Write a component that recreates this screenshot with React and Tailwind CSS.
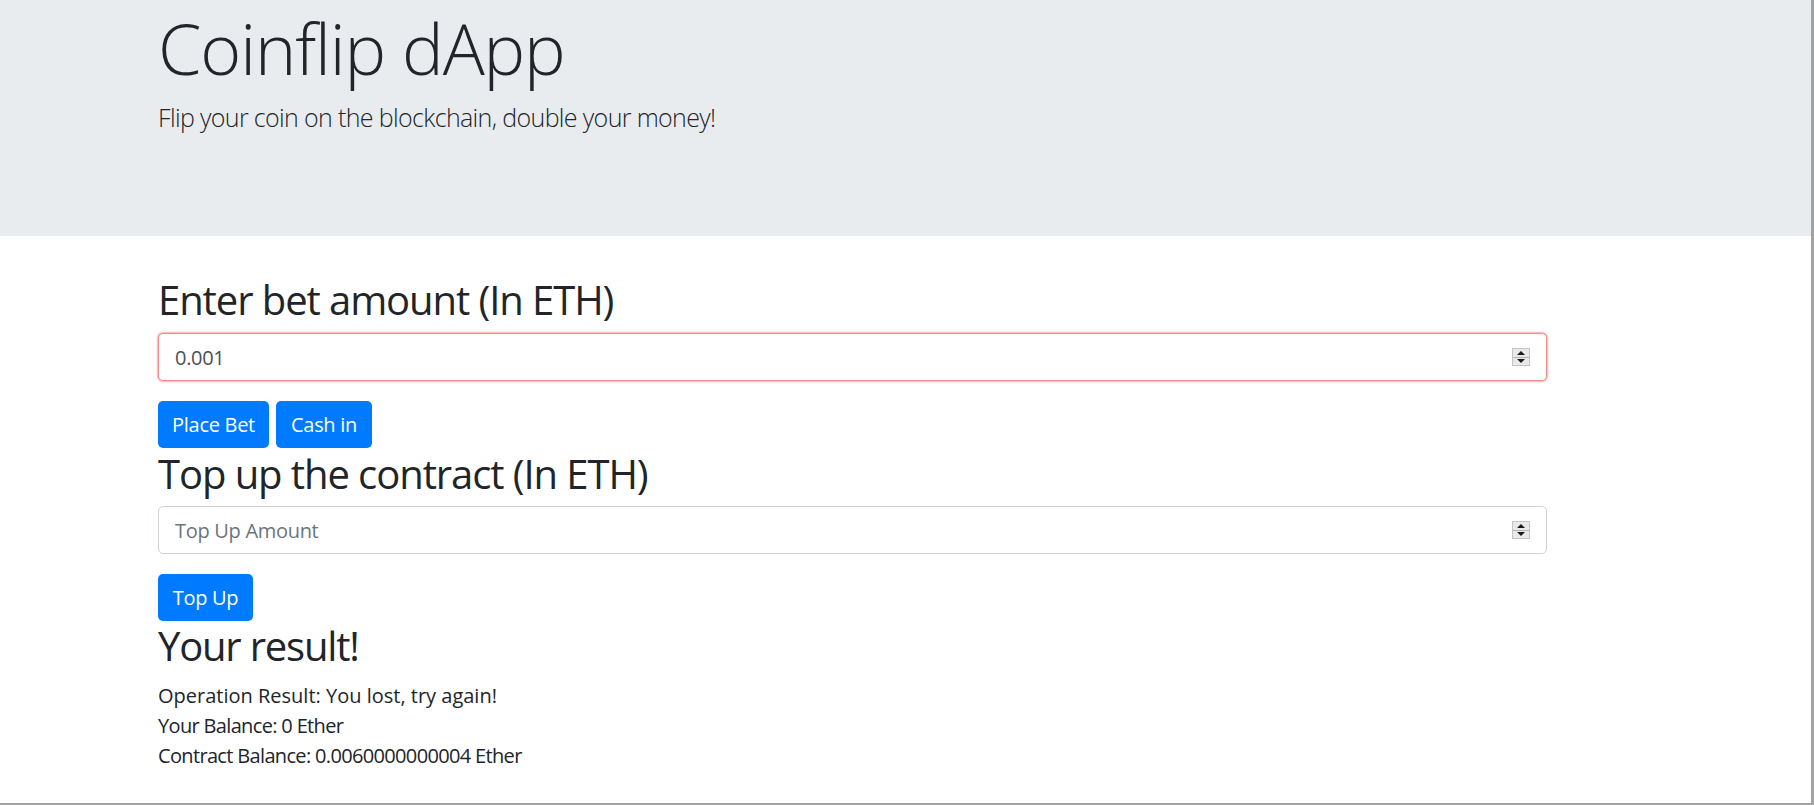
import React from 'react';

const FONT = { fontFamily: '"Open Sans", "Noto Sans", "Liberation Sans", sans-serif' };

function Spinner() {
  return (
    <div className="flex flex-col w-[18px] h-[18px] mr-[16px] border border-[#c4c4c4] bg-[#e9e9e9]">
      <div className="flex-1 flex items-center justify-center border-b border-[#b4b4b4]">
        <div className="w-0 h-0 border-l-[4px] border-r-[4px] border-b-[4px] border-l-transparent border-r-transparent border-b-[#1a1a1a]" />
      </div>
      <div className="flex-1 flex items-center justify-center">
        <div className="w-0 h-0 border-l-[4px] border-r-[4px] border-t-[4px] border-l-transparent border-r-transparent border-t-[#1a1a1a]" />
      </div>
    </div>
  );
}

function NumberField({ value, placeholder, invalid }) {
  return (
    <div className={`flex items-center w-[1389px] h-[48px] rounded-[5px] border bg-white ${invalid ? 'border-[#f28b8b] shadow-[0_0_1.5px_1px_rgba(255,80,80,0.45)]' : 'border-[#ced4da]'}`}>
      <input
        type="text"
        defaultValue={value}
        placeholder={placeholder}
        className="flex-1 h-full bg-transparent pl-[16px] text-[20px] tracking-[-0.015em] text-[#495057] placeholder:text-[#6c757d] outline-none"
        style={FONT}
      />
      <Spinner />
    </div>
  );
}

function Btn({ children, w }) {
  return (
    <button className={`${w} h-[47px] rounded-[5px] bg-[#007bff] text-white text-[20px] leading-[30px] tracking-[-0.015em] text-center`} style={FONT}>
      {children}
    </button>
  );
}

export default function App() {
  return (
    <div className="w-[1814px] h-[805px] bg-white text-[#212529] border-b-2 border-r-[3px] border-[#a2a2a2] overflow-hidden" style={FONT}>
      {/* Jumbotron */}
      <div className="h-[236px] bg-[#e9ecef] pl-[158px] pt-[6px]">
        <h1 className="text-[70px] font-light leading-[84px] tracking-[-0.016em]">Coinflip dApp</h1>
        <p className="mt-[9px] text-[25px] font-light leading-[37.5px] tracking-[-0.026em]">Flip your coin on the blockchain, double your money!</p>
      </div>

      <div className="pl-[158px] pt-[40px]">
        <h2 className="text-[40px] font-medium leading-[48px] tracking-[-0.027em]">Enter bet amount (In ETH)</h2>
        <div className="mt-[9px]">
          <NumberField value="0.001" invalid />
        </div>
        <div className="flex gap-[7px] mt-[20px]">
          <Btn w="w-[111px]">Place Bet</Btn>
          <Btn w="w-[96px]">Cash in</Btn>
        </div>

        <h2 className="text-[40px] font-medium leading-[48px] tracking-[-0.027em] mt-[2px]">Top up the contract (In ETH)</h2>
        <div className="mt-[8px]">
          <NumberField placeholder="Top Up Amount" />
        </div>
        <div className="flex mt-[20px]">
          <Btn w="w-[95px]">Top Up</Btn>
        </div>

        <h2 className="text-[40px] font-medium leading-[48px] tracking-[-0.03em] mt-[1px]">Your result!</h2>
        <div className="mt-[11px] text-[20px] leading-[30px]">
          <div>Operation Result: You lost, try again!</div>
          <div className="tracking-[-0.033em]">Your Balance: 0 Ether</div>
          <div className="tracking-[-0.033em]">Contract Balance: 0.0060000000004 Ether</div>
        </div>
      </div>
    </div>
  );
}
